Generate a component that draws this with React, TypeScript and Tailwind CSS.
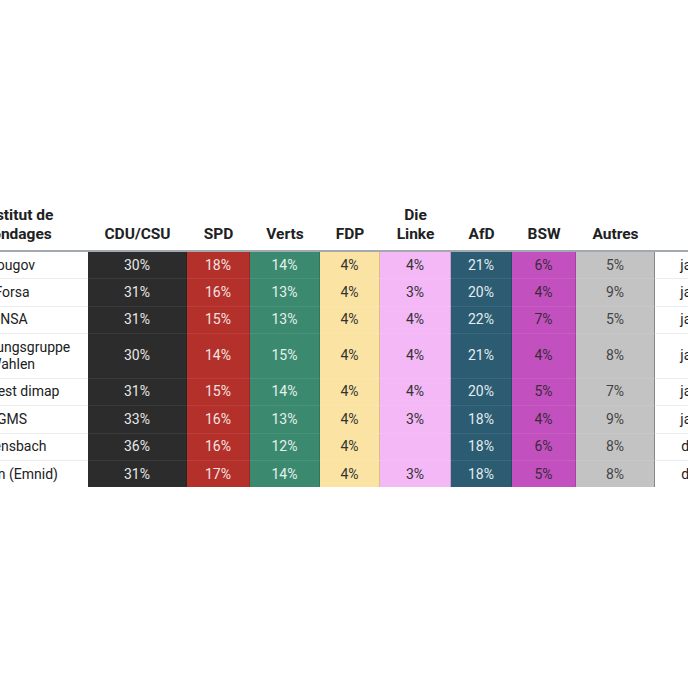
import React from 'react';

// Party columns, in table order
const parties = [
  { name: 'CDU/CSU', cell: 'bg-[#2c2c2c] text-[#e8e8e8]' },
  { name: 'SPD', cell: 'bg-[#b4302a] text-[#f2e4e2]' },
  { name: 'Verts', cell: 'bg-[#3b8a6f] text-[#e6f0ec]' },
  { name: 'FDP', cell: 'bg-[#fbe4a3] text-[#333333]' },
  { name: 'Die Linke', cell: 'bg-[#f3b8f5] text-[#333333]' },
  { name: 'AfD', cell: 'bg-[#2b5c71] text-[#e4ecf0]' },
  { name: 'BSW', cell: 'bg-[#c350bf] text-[#3a2a3a]' },
  { name: 'Autres', cell: 'bg-[#c3c3c3] text-[#444444]' },
];

type Row = { institute: React.ReactNode; values: (number | null)[]; date: string };

const rows: Row[] = [
  { institute: 'Yougov', values: [30, 18, 14, 4, 4, 21, 6, 5], date: 'janv. 2025' },
  { institute: 'Forsa', values: [31, 16, 13, 4, 3, 20, 4, 9], date: 'janv. 2025' },
  { institute: 'INSA', values: [31, 15, 13, 4, 4, 22, 7, 5], date: 'janv. 2025' },
  {
    institute: (
      <>
        Forschungsgruppe
        <br />
        Wahlen
      </>
    ),
    values: [30, 14, 15, 4, 4, 21, 4, 8],
    date: 'janv. 2025',
  },
  { institute: 'Infratest dimap', values: [31, 15, 14, 4, 4, 20, 5, 7], date: 'janv. 2025' },
  { institute: 'GMS', values: [33, 16, 13, 4, 3, 18, 4, 9], date: 'janv. 2025' },
  { institute: 'Allensbach', values: [36, 16, 12, 4, null, 18, 6, 8], date: 'déc. 2024' },
  { institute: 'Verian (Emnid)', values: [31, 17, 14, 4, 3, 18, 5, 8], date: 'déc. 2024' },
];

const HeaderCell = ({ children, pad = 'px-1' }: { children: React.ReactNode; pad?: string }) => (
  <div
    className={`flex items-end justify-center text-center ${pad} pt-1 pb-[7px] border-b-2 border-[#a2a9b1] text-[15.5px] leading-[18.5px] font-bold text-[#202122]`}
  >
    <div>{children}</div>
  </div>
);

export default function App() {
  return (
    <div
      className="w-[688px] h-[688px] overflow-hidden bg-white"
      style={{ fontFamily: 'Roboto, "Liberation Sans", sans-serif' }}
    >
      <div className="mt-[202px] ml-[-64px] w-max grid grid-cols-[152px_99px_63px_70px_60px_71px_61px_64px_79px_114px]">
        {/* header */}
        <HeaderCell pad="pl-[16px] pr-1">
          Institut de
          <br />
          sondages
        </HeaderCell>
        {parties.map((p) => (
          <HeaderCell key={p.name}>
            {p.name === 'Die Linke' ? (
              <>
                Die
                <br />
                Linke
              </>
            ) : (
              p.name
            )}
          </HeaderCell>
        ))}
        <HeaderCell>Date</HeaderCell>

        {/* body */}
        {rows.map((r, i) => {
          const last = i === rows.length - 1;
          return (
            <React.Fragment key={i}>
              <div
                className={`flex items-center justify-center text-center px-2 py-[4.6px] text-[14px] leading-[17.2px] text-[#202122] ${
                  last ? '' : 'border-b border-[#eaecf0]'
                }`}
              >
                <div>{r.institute}</div>
              </div>
              {r.values.map((v, j) => (
                <div
                  key={j}
                  className={`flex items-center justify-center py-[4.6px] text-[14px] leading-[17.2px] border-r ${
                    j === 7 ? 'border-r-black/30' : 'border-r-black/15'
                  } ${last ? '' : 'border-b border-b-white/[0.07]'} ${parties[j].cell}`}
                >
                  {v === null ? '' : `${v}%`}
                </div>
              ))}
              <div
                className={`flex items-center justify-center text-center px-2 py-[4.6px] text-[14px] leading-[17.2px] text-[#202122] ${
                  last ? '' : 'border-b border-[#eaecf0]'
                }`}
              >
                {r.date}
              </div>
            </React.Fragment>
          );
        })}
      </div>
    </div>
  );
}
